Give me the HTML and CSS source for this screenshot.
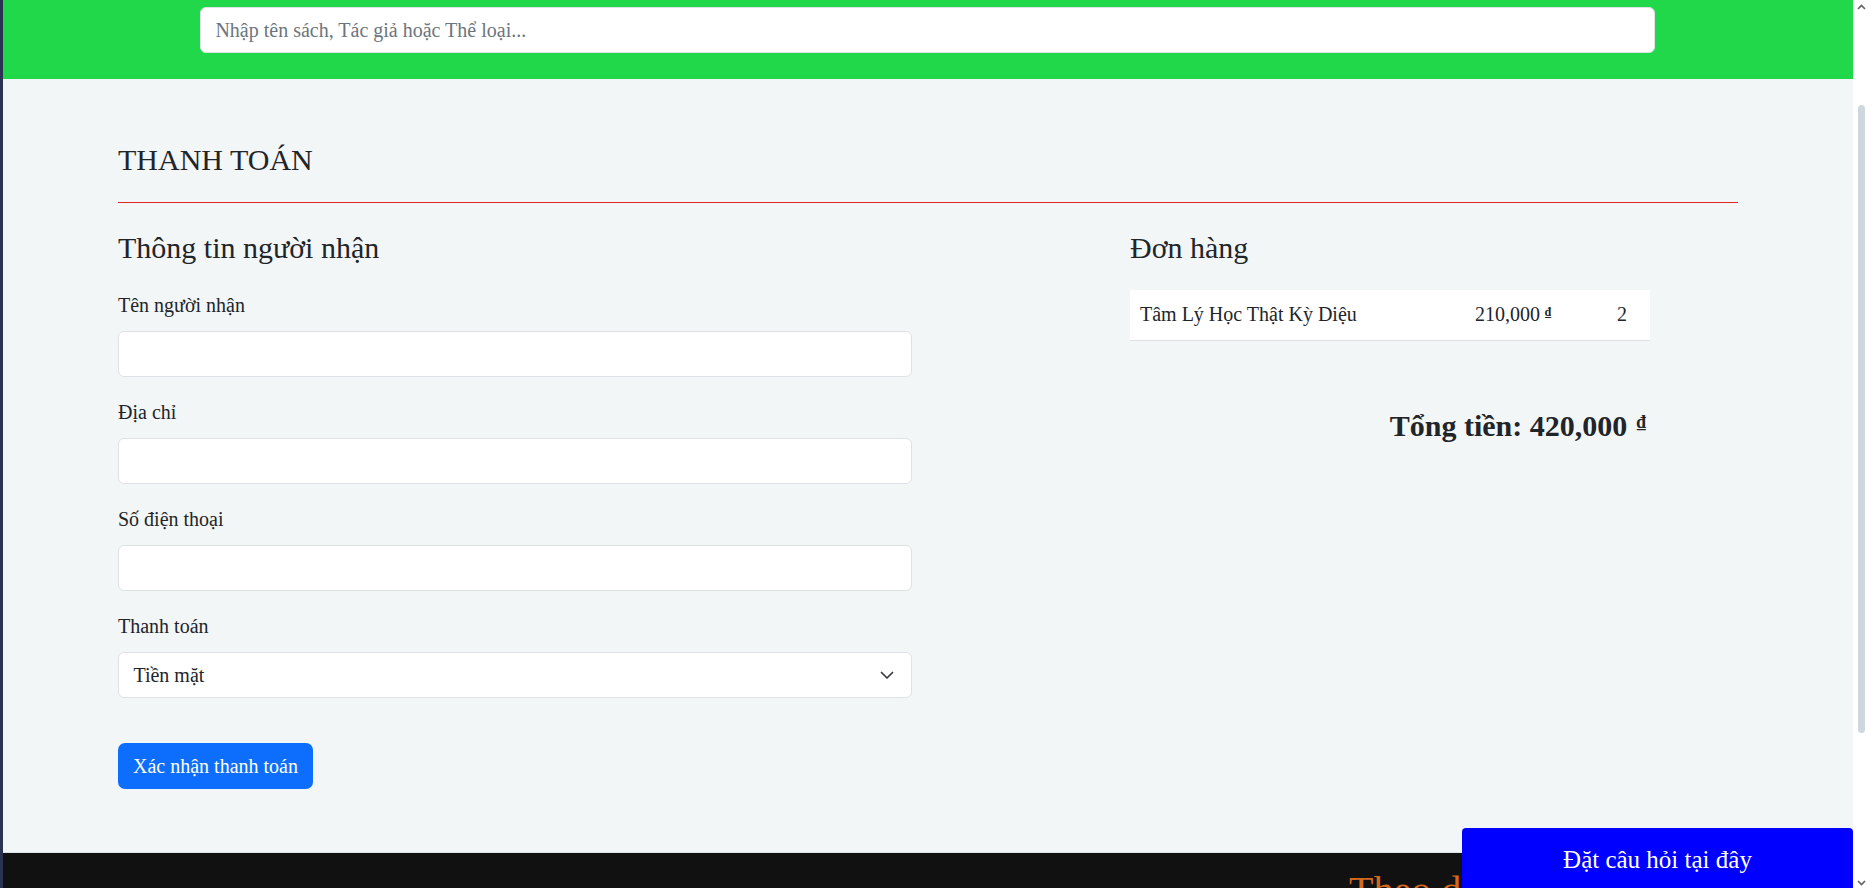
FILE: index.html
```html
<!DOCTYPE html>
<html lang="vi">
<head>
<meta charset="utf-8">
<title>Thanh toán</title>
<link rel="stylesheet" href="styles.css">
</head>
<body>
<div class="frame">
  <div class="page">
    <header class="topbar">
      <input class="search" type="text" placeholder="Nhập tên sách, Tác giả hoặc Thể loại...">
    </header>
    <main class="checkout">
      <h1 class="title">THANH TOÁN</h1>
      <hr class="divider">
      <div class="cols">
        <section class="recipient">
          <h2 class="section-title">Thông tin người nhận</h2>
          <div class="field">
            <label class="label">Tên người nhận</label>
            <input class="control" type="text">
          </div>
          <div class="field">
            <label class="label">Địa chỉ</label>
            <input class="control" type="text">
          </div>
          <div class="field">
            <label class="label">Số điện thoại</label>
            <input class="control" type="text">
          </div>
          <div class="field">
            <label class="label">Thanh toán</label>
            <div class="control select">
              <span>Tiền mặt</span>
              <svg class="chev" width="14" height="9" viewBox="0 0 14 9"><path d="M1.5 1.5 7 7l5.5-5.5" fill="none" stroke="#343a40" stroke-width="1.7" stroke-linecap="round" stroke-linejoin="round"/></svg>
            </div>
          </div>
          <button class="btn" type="button">Xác nhận thanh toán</button>
        </section>
        <section class="order">
          <h2 class="section-title">Đơn hàng</h2>
          <table class="items">
            <tr>
              <td class="c-name">Tâm Lý Học Thật Kỳ Diệu</td>
              <td class="c-price">210,000 <span class="cur">₫</span></td>
              <td class="c-qty">2</td>
            </tr>
          </table>
          <div class="total">Tổng tiền: 420,000 <span class="cur">₫</span></div>
        </section>
      </div>
    </main>
    <footer class="footer">
      <div class="footer-inner">
        <h3 class="footer-title">Theo dõi</h3>
      </div>
    </footer>
  </div>
  <div class="scrollbar">
    <svg class="arrow" width="9" height="6" viewBox="0 0 9 6"><path d="M1 5 4.5 1.5 8 5" fill="none" stroke="#606060" stroke-width="1.6"/></svg>
    <div class="thumb"></div>
    <svg class="arrow" width="9" height="6" viewBox="0 0 9 6"><path d="M1 1 4.5 4.5 8 1" fill="none" stroke="#606060" stroke-width="1.6"/></svg>
  </div>
</div>
<a class="ask" href="#">Đặt câu hỏi tại đây</a>
</body>
</html>
```
FILE: styles.css
```css
* { box-sizing: border-box; }
html, body {
  margin: 0;
  height: 100%;
  overflow: hidden;
}
body {
  font-family: "Liberation Serif", "Times New Roman", serif;
  color: #212529;
  background: #fff;
}
.frame {
  display: flex;
  height: 888px;
  overflow: hidden;
}
.page {
  flex: 1;
  min-width: 0;
  background: #f3f6f7;
  border-left: 3px solid #2a3352;
  display: flex;
  flex-direction: column;
}
.topbar {
  background: #21d84b;
  height: 79px;
  padding: 7px 0 0 197px;
  flex-shrink: 0;
}
.search {
  display: block;
  width: 1455px;
  height: 46px;
  border: 1px solid #dee2e6;
  border-radius: 6px;
  background: #fff;
  padding: 0 14.4px;
  font-family: inherit;
  font-size: 20px;
  color: #212529;
  outline: none;
}
.search::placeholder { color: #6c757d; }

.checkout {
  padding: 63px 115px 63px 115px;
  flex-shrink: 0;
}
.title {
  margin: 0;
  font-size: 30px;
  line-height: 36px;
  font-weight: 400;
}
.divider {
  margin: 24px 0 0;
  border: 0;
  border-top: 1px solid #e02424;
  height: 0;
}
.cols {
  display: grid;
  grid-template-columns: 794px 520px;
  column-gap: 218px;
}
.section-title {
  margin: 27px 0 0;
  font-size: 30px;
  line-height: 35px;
  font-weight: 400;
}
.field {
  display: flex;
  flex-direction: column;
  margin-top: 26px;
}
.field + .field { margin-top: 21px; }
.label {
  font-size: 20px;
  line-height: 29px;
  margin-bottom: 11px;
}
.control {
  height: 46px;
  border: 1px solid #dee2e6;
  border-radius: 6px;
  background: #fff;
  padding: 0 14.4px;
  font-family: inherit;
  font-size: 20px;
  color: #212529;
  outline: none;
}
.select {
  display: flex;
  align-items: center;
  justify-content: space-between;
  padding-right: 17px;
}
.btn {
  margin-top: 45px;
  height: 46px;
  width: 195px;
  border: 0;
  border-radius: 7px;
  background: #0d6efd;
  color: #fff;
  font-family: inherit;
  font-size: 20px;
  padding: 0;
}
.items {
  margin-top: 25px;
  width: 520px;
  border-collapse: collapse;
  background: #fff;
}
.items td {
  height: 50px;
  padding: 0 10px;
  font-size: 20px;
  border-bottom: 1px solid #dee2e6;
  vertical-align: middle;
  white-space: nowrap;
}
.c-name { width: 335px; }
.c-price { width: 140px; }
.c-qty { padding-left: 12px !important; }
.cur {
  font-size: 0.6em;
  vertical-align: 0.45em;
  font-weight: 700;
}
.total .cur { margin-left: 2px; }
.total {
  margin-top: 64px;
  text-align: right;
  font-size: 30px;
  line-height: 35px;
  font-weight: 700;
  padding-right: 4px;
}
.footer {
  flex: 1;
  background: #111111;
  border-top: 1px solid #dde3e6;
  padding: 14px 115px 0;
}
.footer-inner {
  display: flex;
  justify-content: flex-end;
}
.footer-title {
  width: 389px;
  margin: 0;
  font-size: 40px;
  line-height: 48px;
  font-weight: 400;
  color: #d2691e;
}
.scrollbar {
  width: 17px;
  flex-shrink: 0;
  background: #fff;
  display: flex;
  flex-direction: column;
  align-items: center;
  padding: 4px 0 2px;
}
.thumb {
  width: 7px;
  margin: 95px 0 0;
  height: 628px;
  background: #cfd7de;
  border-radius: 4px;
}
.scrollbar .arrow:last-child { margin-top: auto; }
.ask {
  position: fixed;
  right: 17px;
  bottom: 0;
  width: 391px;
  height: 60px;
  background: #0000ff;
  color: #fff;
  text-decoration: none;
  text-align: center;
  font-size: 25px;
  line-height: 37px;
  padding-top: 13px;
  border-radius: 4px 4px 0 0;
}
```
